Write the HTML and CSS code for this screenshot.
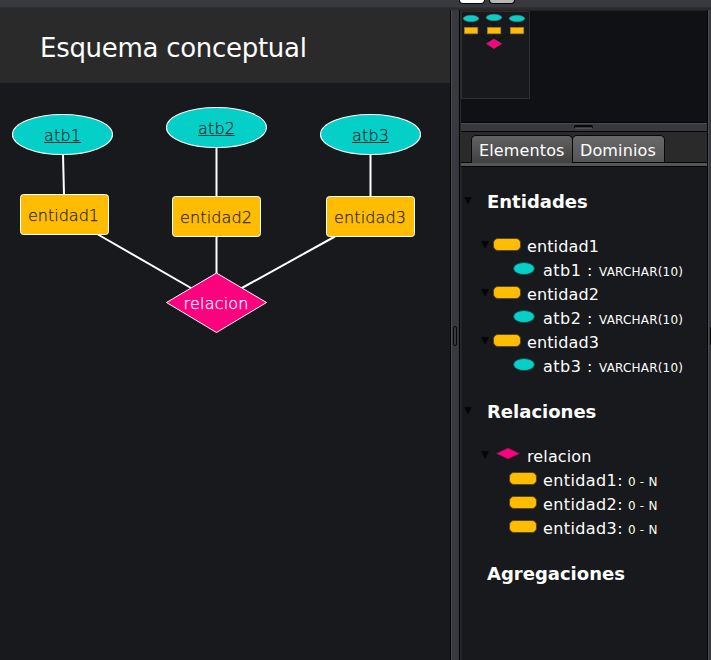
FILE: index.html
```html
<!DOCTYPE html>
<html lang="es">
<head>
<meta charset="utf-8">
<title>Esquema conceptual</title>
<link rel="stylesheet" href="styles.css">
</head>
<body>
<div class="app">
  <div class="toolbar"><span class="tool tool-light"></span><span class="tool tool-gray"></span></div>
  <div class="workspace">
    <main class="editor">
      <h1 class="title">Esquema conceptual</h1>
      <svg class="diagram" width="450" height="577" viewBox="0 83 450 577">
        <g stroke="#fff" stroke-width="2">
          <path d="M63 154L64 195M216.500 147V197M370.500 154V197M216.500 236V274M98 234.500L191 288M335 236.500L241 288.500"/>
        </g>
        <g fill="#05d0c8" stroke="#fff" stroke-width="1.100">
          <ellipse cx="62.500" cy="134.500" rx="50" ry="20"/>
          <ellipse cx="216.500" cy="127.500" rx="50" ry="20"/>
          <ellipse cx="370.500" cy="134.500" rx="50" ry="20"/>
        </g>
        <g fill="#ffbc00" stroke="#fff">
          <rect x="20.500" y="194.500" width="88" height="40" rx="3"/>
          <rect x="172.500" y="196.500" width="88" height="40" rx="3"/>
          <rect x="326.500" y="196.500" width="88" height="40" rx="3"/>
        </g>
        <path d="M216.500 273L266.500 302.500L216.500 332.500L166.500 302.500Z" fill="#ff007e" stroke="#fff"/>
        <g class="label key">
          <text x="44" y="141" textLength="37">atb1</text>
          <text x="198" y="134" textLength="37">atb2</text>
          <text x="352" y="141" textLength="37">atb3</text>
        </g>
        <path d="M44 142.500H81M198 135.500H235M352 142.500H389" stroke="#333"/>
        <g class="label">
          <text x="28" y="221" textLength="71">entidad1</text>
          <text x="180" y="223" textLength="72">entidad2</text>
          <text x="334" y="223" textLength="72">entidad3</text>
        </g>
        <text class="label relation" x="183.500" y="309" textLength="65">relacion</text>
      </svg>
    </main>
    <div class="splitter"><span class="grip"></span></div>
    <aside class="sidebar">
      <section class="overview">
        <svg class="minimap" width="69" height="89" viewBox="461 10 69 89">
          <rect x="461.500" y="11.500" width="68" height="87" fill="#18191c" stroke="#2d2e30"/>
          <path d="M471 20V30M494 20V30M517 20V30M478 33L494 43L510 33M494 33V43" stroke="#0d0e10" fill="none"/>
          <g fill="#05d0c8" stroke="#547777" stroke-width=".6">
            <ellipse cx="471" cy="18.500" rx="7.700" ry="3.200"/><ellipse cx="494" cy="17.500" rx="7.700" ry="3.200"/><ellipse cx="517" cy="18.500" rx="7.700" ry="3.200"/>
          </g>
          <g fill="#ffbc00" stroke="#8a7440" stroke-width=".7">
            <rect x="464.300" y="27.300" width="13.500" height="6.500"/><rect x="487.300" y="27.300" width="13.500" height="6.500"/><rect x="510.300" y="27.300" width="13.500" height="6.500"/>
          </g>
          <path d="M494 39L501.500 43.700L494 48.500L486.500 43.700Z" fill="#ff007e" stroke="#8b4b6e" stroke-width=".6"/>
        </svg>
      </section>
      <div class="hsplitter"><span class="hgrip"></span></div>
      <nav class="tabs"><span class="tab active">Elementos</span><span class="tab">Dominios</span></nav>
      <section class="tree">
        <h2 class="heading"><i class="arrow"></i><span>Entidades</span></h2>
        <div class="row node"><i class="arrow"></i><i class="entity"></i><span class="name">entidad1</span></div>
        <div class="row leaf"><i class="attr"></i><span class="name aname">atb1 :</span><small class="type">VARCHAR(10)</small></div>
        <div class="row node"><i class="arrow"></i><i class="entity"></i><span class="name">entidad2</span></div>
        <div class="row leaf"><i class="attr"></i><span class="name aname">atb2 :</span><small class="type">VARCHAR(10)</small></div>
        <div class="row node"><i class="arrow"></i><i class="entity"></i><span class="name">entidad3</span></div>
        <div class="row leaf"><i class="attr"></i><span class="name aname">atb3 :</span><small class="type">VARCHAR(10)</small></div>
        <h2 class="heading next"><i class="arrow"></i><span>Relaciones</span></h2>
        <div class="row node"><i class="arrow"></i><svg class="diamond" width="28" height="14" viewBox="0 0 28 14"><path d="M15 1L26.500 6.500L15 12L3.500 6.500Z" fill="#ff007e" stroke="#5d2444" stroke-width=".8"/></svg><span class="name">relacion</span></div>
        <div class="row member"><i class="entity"></i><span class="name mname">entidad1:</span><small class="card">0 - N</small></div>
        <div class="row member"><i class="entity"></i><span class="name mname">entidad2:</span><small class="card">0 - N</small></div>
        <div class="row member"><i class="entity"></i><span class="name mname">entidad3:</span><small class="card">0 - N</small></div>
        <h2 class="heading last"><span>Agregaciones</span></h2>
      </section>
    </aside>
    <div class="splitter edge"><span class="grip"></span></div>
  </div>
</div>
</body>
</html>
```
FILE: styles.css
```css
* { box-sizing: border-box; }
body { margin: 0; overflow: hidden; background: #18191c; color: #fff; font-family: Verdana, "DejaVu Sans", sans-serif; }
.app { width: 711px; height: 660px; display: flex; flex-direction: column; }
.toolbar { height: 8px; flex: none; background: #38383f; border-bottom: 1px solid #303034; padding-left: 459px; display: flex; gap: 4px; }
.tool { width: 26px; height: 4px; border: solid #050506; border-width: 0 1px 1px; border-radius: 0 0 4px 4px; }
.tool-light { background: #fff; }
.tool-gray { background: #b8b8b8; }
.workspace { flex: 1; display: flex; min-height: 0; background: #2a2a2a; }
.editor { width: 450px; flex: none; background: #18191c; }
.title { margin: 0; height: 75px; padding: 1px 0 0 40px; background: #2a2a2a; font-size: 26px; line-height: 78px; font-weight: 400; letter-spacing: -.29px; white-space: nowrap; }
.diagram { display: block; }
.label { font-family: "DejaVu Sans", sans-serif; font-size: 16px; font-weight: 200; fill: #2b2b2b; stroke: #2b2b2b; stroke-width: .25px; }
.relation { fill: #fff; stroke: #fff; }
.splitter { width: 10px; flex: none; margin-top: 2px; display: flex; align-items: center; justify-content: center; background: #38383f; border: solid #050506; border-width: 0 1px; box-shadow: inset 1px 0 #4b4b54, inset -1px 0 #34343b; }
.grip { width: 4px; height: 20px; margin-top: 2px; border: 1px solid #08080a; border-radius: 2px; }
.sidebar { width: 246px; flex: none; margin: 2px 0 0 1px; display: flex; flex-direction: column; background: #18191c; }
.overview { height: 112px; flex: none; background: #101115; border-top: 1px solid #222; }
.minimap { display: block; margin-top: -1px; }
.hsplitter { height: 10px; flex: none; background: #38383f; border: solid #050506; border-width: 1px 0; box-shadow: inset 0 1px #4b4b54; display: flex; justify-content: center; align-items: center; }
.hgrip { width: 19px; height: 4px; margin-right: 2px; border: 1px solid #08080a; border-top-width: 2px; border-bottom-color: #515158; border-radius: 2px; }
.tabs { height: 35px; flex: none; padding: 3px 0 0 10px; display: flex; background: linear-gradient(#2a2a2a 0 30px, #050506 30px 31px, #555 31px 34px, #050506 34px); }
.tab { height: 28px; width: 93px; padding-left: 7px; font-size: 16px; line-height: 29px; border: solid #08080a; border-width: 1px 1px 0; border-radius: 5px 5px 0 0; background: linear-gradient(#686868, #555); letter-spacing: .13px; white-space: nowrap; }
.tab:not(.active) { height: 27px; }
.tab.active { width: 102px; background: linear-gradient(#626262, #404040); margin-right: -1px; }
.tree { flex: 1; padding-top: 23px; border-left: 1px solid #202124; }
.heading { margin: 0 0 20px; height: 24px; padding-left: 2px; display: flex; align-items: center; font-size: 18px; line-height: 24px; font-weight: 700; letter-spacing: 0; }
.heading .arrow { margin-right: 15px; margin-top: -3px; }
.heading.next { margin-top: 22px; }
.heading.last { margin-top: 22px; padding-left: 25px; }
.arrow { width: 8px; height: 8px; flex: none; background: #050506; clip-path: polygon(0 0, 100% 0, 50% 100%); }
.row { height: 24px; display: flex; align-items: center; font-size: 16px; line-height: 24px; white-space: nowrap; }
.node { padding-left: 19px; }
.node .arrow { margin-right: 4px; margin-top: -2px; }
.name { padding-top: 2px; letter-spacing: .12px; }
.entity { width: 28px; height: 13px; flex: none; margin: 0 6px 3px 0; background: #ffbc00; border: 1px solid #594822; border-radius: 5px; }
.diamond { flex: none; margin: 0 6px 5px 0; }
.leaf { padding-left: 51px; }
.attr { width: 22px; height: 13px; flex: none; margin: 0 8px 3px 0; background: #05d0c8; border: 1px solid #174e4e; border-radius: 50%; }
.member { padding-left: 47px; }
.aname { width: 56px; letter-spacing: .5px; }
.mname { width: 85px; letter-spacing: .4px; }
.type, .card { font-size: 12px; line-height: 24px; padding-top: 4px; letter-spacing: .2px; }
.card { color: #ffffe8; }
```
